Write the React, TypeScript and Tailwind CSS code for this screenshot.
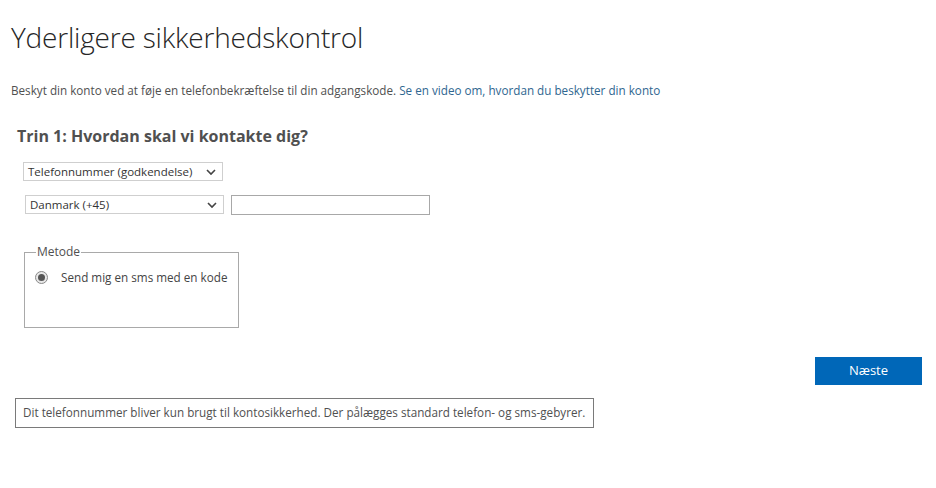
import React from "react";

function Chevron() {
  return (
    <svg width="10" height="7" viewBox="0 0 10 7" className="absolute right-[6px] top-1/2 -translate-y-1/2">
      <path d="M1 1.5 L5 5.5 L9 1.5" fill="none" stroke="#444" strokeWidth="1.6" />
    </svg>
  );
}

function FakeSelect({ label, className }: { label: string; className: string }) {
  return (
    <div className={`relative flex items-center h-[19px] border border-[#cfcfcf] bg-white pl-[4px] text-[11.5px] text-[#333] ${className}`}>
      {label}
      <Chevron />
    </div>
  );
}

export default function App() {
  return (
    <div className="w-[936px] h-[488px] bg-white font-['Open_Sans','Noto_Sans',sans-serif] text-[#444]">
      <div className="pl-[11px] pt-[19px]">
        <h1 className="text-[28px] font-light leading-[36px] text-[#262626] tracking-[-0.2px]">
          Yderligere sikkerhedskontrol
        </h1>
        <p className="mt-[27px] text-[11.7px] leading-[16px] text-[#505050]">
          Beskyt din konto ved at føje en telefonbekræftelse til din adgangskode.{" "}
          <a className="text-[#2f6690]">Se en video om, hvordan du beskytter din konto</a>
        </p>
      </div>

      <div className="pl-[17px] pt-[27px]">
        <h2 className="text-[16px] font-bold leading-[22px] text-[#505050]">
          Trin 1: Hvordan skal vi kontakte dig?
        </h2>
        <div className="mt-[15px] pl-[6px]">
          <FakeSelect label="Telefonnummer (godkendelse)" className="w-[200px]" />
        </div>
        <div className="mt-[14px] pl-[8px] flex gap-[7px]">
          <FakeSelect label="Danmark (+45)" className="w-[199px]" />
          <div className="w-[199px] h-[20px] border border-[#a8a8a8] bg-white" />
        </div>

        <fieldset className="mt-[30px] ml-[7px] w-[215px] min-w-0 h-[83px] border border-[#a9a9a9] pl-[10px] pr-0 pt-[5px] pb-0">
          <legend className="px-px ml-[1px] text-[12px] leading-[14px] text-[#505050]">Metode</legend>
          <label className="flex items-center gap-[13px] whitespace-nowrap text-[11.7px] text-[#444] mt-[5px]">
            <span className="shrink-0 w-[13px] h-[13px] rounded-full border border-[#8a8a8a] bg-[#e8e8e8] flex items-center justify-center">
              <span className="w-[7px] h-[7px] rounded-full bg-[#555]" />
            </span>
            Send mig en sms med en kode
          </label>
        </fieldset>
      </div>

      <div className="flex justify-end pr-[14px] mt-[29px]">
        <button className="w-[107px] h-[28px] bg-[#0067b8] text-white text-[13px]">Næste</button>
      </div>

      <div className="ml-[15px] mt-[13px] w-[579px] h-[30px] border border-[#7a7a7a] flex items-center pl-[7px] text-[11.7px] text-[#505050]">
        Dit telefonnummer bliver kun brugt til kontosikkerhed. Der pålægges standard telefon- og sms-gebyrer.
      </div>
    </div>
  );
}
